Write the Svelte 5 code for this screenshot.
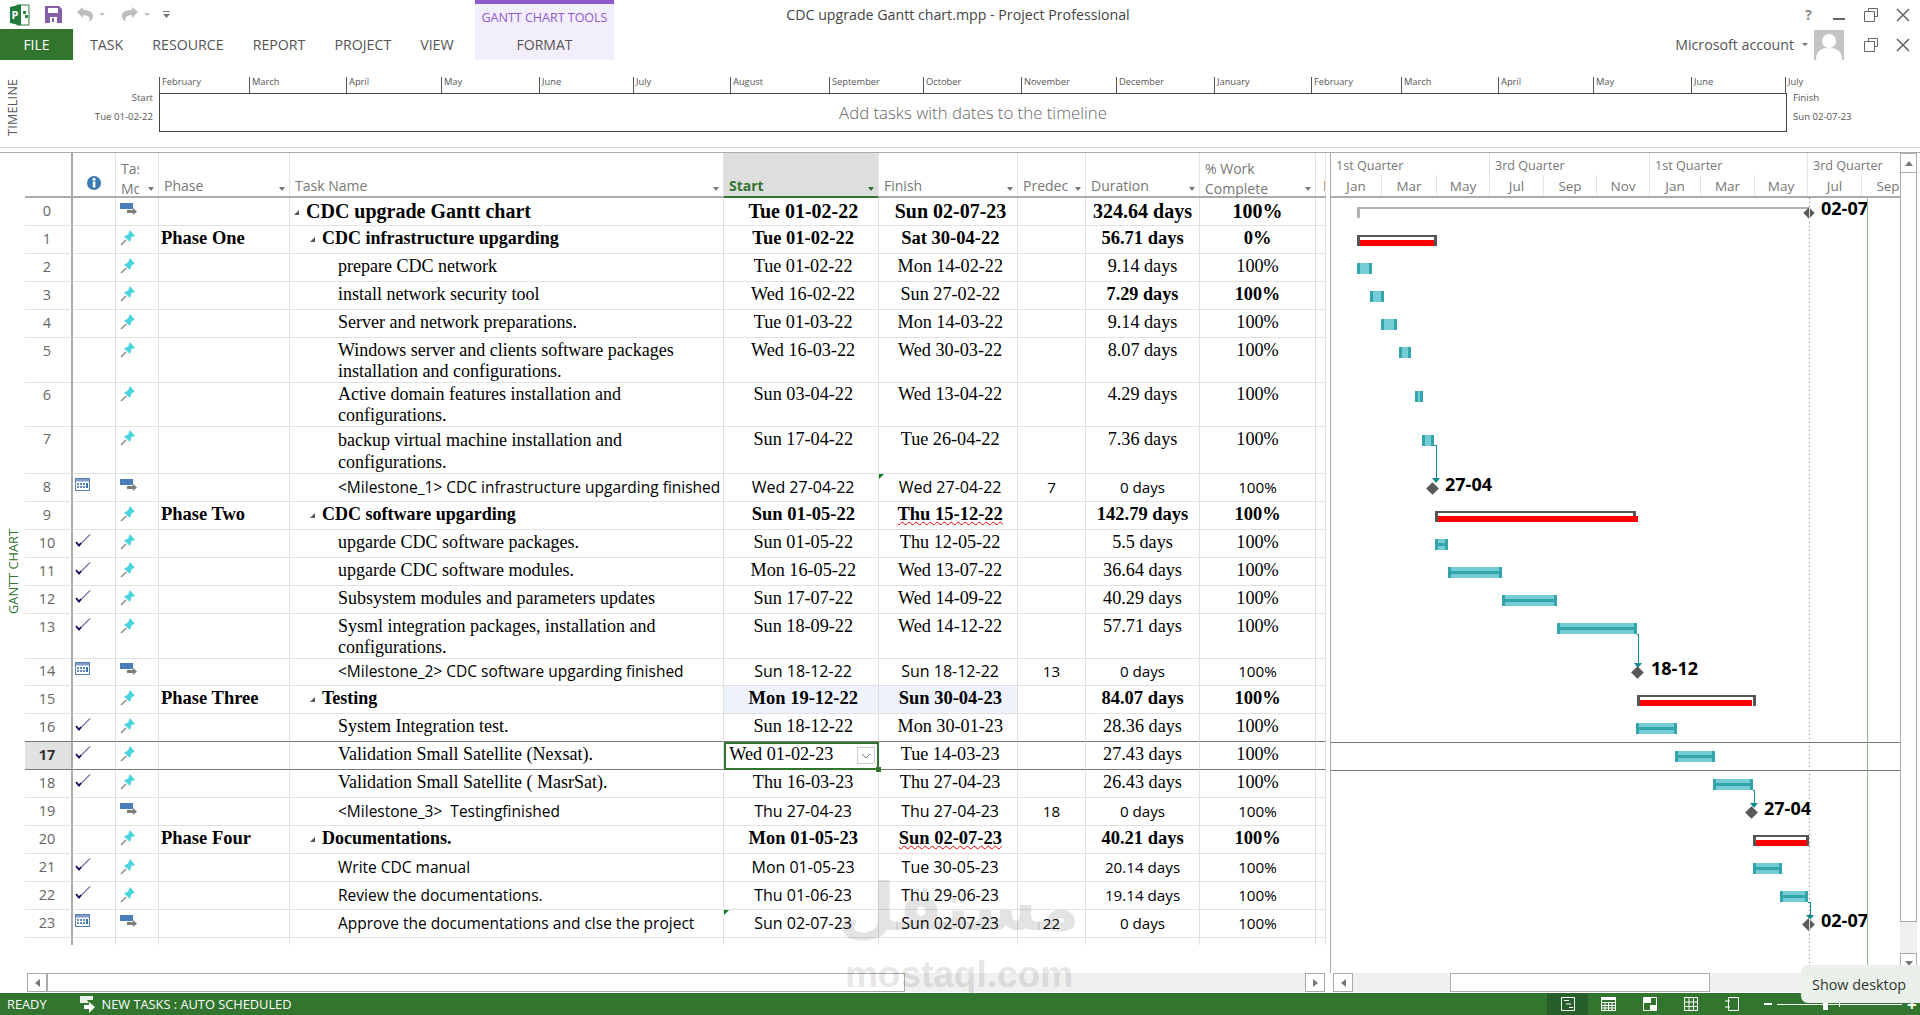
<script>
  const rows = [
    { n:0, h:28, name:'CDC upgrade Gantt chart', lvl:0, s:'Tue 01-02-22', f:'Sun 02-07-23', d:'324.64 days', w:'100%', kind:'b', mode:'auto', top:true },
    { n:1, h:28, ph:'Phase One', name:'CDC infrastructure upgarding', lvl:1, s:'Tue 01-02-22', f:'Sat 30-04-22', d:'56.71 days', w:'0%', kind:'b' },
    { n:2, h:28, name:'prepare CDC network', lvl:2, s:'Tue 01-02-22', f:'Mon 14-02-22', d:'9.14 days', w:'100%' },
    { n:3, h:28, name:'install network security tool', lvl:2, s:'Wed 16-02-22', f:'Sun 27-02-22', d:'7.29 days', w:'100%', bd:true },
    { n:4, h:28, name:'Server and network preparations.', lvl:2, s:'Tue 01-03-22', f:'Mon 14-03-22', d:'9.14 days', w:'100%' },
    { n:5, h:44, name:'Windows server and clients software packages\ninstallation and configurations.', lvl:2, s:'Wed 16-03-22', f:'Wed 30-03-22', d:'8.07 days', w:'100%' },
    { n:6, h:44, name:'Active domain features installation and\nconfigurations.', lvl:2, s:'Sun 03-04-22', f:'Wed 13-04-22', d:'4.29 days', w:'100%' },
    { n:7, h:48, name:'backup virtual machine installation and\nconfigurations.', lvl:2, s:'Sun 17-04-22', f:'Tue 26-04-22', d:'7.36 days', w:'100%', tall:true },
    { n:8, h:28, name:'<Milestone_1> CDC infrastructure upgarding finished', lvl:2, s:'Wed 27-04-22', f:'Wed 27-04-22', p:'7', d:'0 days', w:'100%', kind:'s', mode:'auto', ind:'cal', triF:true },
    { n:9, h:28, ph:'Phase Two', name:'CDC software upgarding', lvl:1, s:'Sun 01-05-22', f:'Thu 15-12-22', d:'142.79 days', w:'100%', kind:'b', wavy:true },
    { n:10, h:28, name:'upgarde CDC software packages.', lvl:2, s:'Sun 01-05-22', f:'Thu 12-05-22', d:'5.5 days', w:'100%', ind:'chk' },
    { n:11, h:28, name:'upgarde CDC software modules.', lvl:2, s:'Mon 16-05-22', f:'Wed 13-07-22', d:'36.64 days', w:'100%', ind:'chk' },
    { n:12, h:28, name:'Subsystem modules and parameters updates', lvl:2, s:'Sun 17-07-22', f:'Wed 14-09-22', d:'40.29 days', w:'100%', ind:'chk' },
    { n:13, h:44, name:'Sysml integration packages, installation and\nconfigurations.', lvl:2, s:'Sun 18-09-22', f:'Wed 14-12-22', d:'57.71 days', w:'100%', ind:'chk' },
    { n:14, h:28, name:'<Milestone_2> CDC software upgarding finished', lvl:2, s:'Sun 18-12-22', f:'Sun 18-12-22', p:'13', d:'0 days', w:'100%', kind:'s', mode:'auto', ind:'cal' },
    { n:15, h:28, ph:'Phase Three', name:'Testing', lvl:1, s:'Mon 19-12-22', f:'Sun 30-04-23', d:'84.07 days', w:'100%', kind:'b', tint:true },
    { n:16, h:28, name:'System Integration test.', lvl:2, s:'Sun 18-12-22', f:'Mon 30-01-23', d:'28.36 days', w:'100%', ind:'chk', lineB:true },
    { n:17, h:28, name:'Validation Small Satellite (Nexsat).', lvl:2, s:'Wed 01-02-23', f:'Tue 14-03-23', d:'27.43 days', w:'100%', ind:'chk', sel:true, lineB:true },
    { n:18, h:28, name:'Validation Small Satellite ( MasrSat).', lvl:2, s:'Thu 16-03-23', f:'Thu 27-04-23', d:'26.43 days', w:'100%', ind:'chk' },
    { n:19, h:28, name:'<Milestone_3>  Testingfinished', lvl:2, s:'Thu 27-04-23', f:'Thu 27-04-23', p:'18', d:'0 days', w:'100%', kind:'s', mode:'auto' },
    { n:20, h:28, ph:'Phase Four', name:'Documentations.', lvl:1, s:'Mon 01-05-23', f:'Sun 02-07-23', d:'40.21 days', w:'100%', kind:'b', wavy:true },
    { n:21, h:28, name:'Write CDC manual', lvl:2, s:'Mon 01-05-23', f:'Tue 30-05-23', d:'20.14 days', w:'100%', kind:'s', ind:'chk' },
    { n:22, h:28, name:'Review the documentations.', lvl:2, s:'Thu 01-06-23', f:'Thu 29-06-23', d:'19.14 days', w:'100%', kind:'s', ind:'chk' },
    { n:23, h:28, name:'Approve the documentations and clse the project', lvl:2, s:'Sun 02-07-23', f:'Sun 02-07-23', p:'22', d:'0 days', w:'100%', kind:'s', mode:'auto', ind:'cal', triS:true },
  ];

  const months = [['February',90],['March',97],['April',95],['May',98],['June',94],['July',97],['August',99],['September',94],['October',98],['November',95],['December',98],['January',97],['February',90],['March',97],['April',95],['May',98],['June',94],['July',20]];
  const quarters = [['1st Quarter',159],['3rd Quarter',160],['1st Quarter',158],['3rd Quarter',93]];
  const gMonths = [['Jan',51],['Mar',55],['May',53],['Jul',54],['Sep',53],['Nov',53],['Jan',51],['Mar',54],['May',53],['Jul',54],['Sep',52]];

  const OX = 1330, OY = 198;
  const tasks = [
    [1356,1371,263,'v'],[1369,1383,291,'v'],[1380,1396,319,'v'],[1398,1410,347,'v'],[1414,1422,391,'v'],[1421,1433,435,'v'],
    [1434,1447,539,'h'],[1447,1501,567,'h'],[1501,1556,595,'h'],[1556,1636,623,'h'],
    [1635,1676,723,'h'],[1674,1714,751,'h'],[1712,1752,779,'h'],[1752,1781,863,'h'],[1779,1807,891,'h'],
  ];
  const summaries = [
    [1356,1436,235,1359,1433],[1434,1635,511,1437,1637],[1636,1755,695,1639,1751],[1752,1808,835,1755,1806],
  ];
  const links = [[1433,1435,445,478],[1636,1637,634,663],[1752,1753,790,803],[1807,1809,902,915]];
  const stones = [[1431,488,'27-04',1444,false],[1636,672,'18-12',1650,false],[1750,812,'27-04',1763,false],[1807.500,924,'02-07',1820,true]];
  const box = (l,t,w,h) => `left:${l-OX}px;top:${t-OY}px;width:${w}px;height:${h}px`;
  const at = (l,t) => `left:${l-OX}px;top:${t-OY}px`;
</script>

<div class="app">
  <header class="ribbon">
    <div class="title-row">
      <div class="qat">
        <svg class="logo" width="22" height="22" viewBox="0 0 22 22"><path d="M8 1h12v20H8z" fill="#fff" stroke="#2c7a3a"/><path d="M1 3l11-2.500v21L1 19z" fill="#1f7a3c"/><text x="2.600" y="15" font-size="11" font-weight="700" fill="#fff" font-family="Open Sans">P</text><path d="M14 7h3v3h-3zM16 11h3v3h-3z" fill="#2c8a45"/></svg>
        <svg class="save" width="17" height="17" viewBox="0 0 17 17"><path d="M0 0h14l3 3v14H0z" fill="#8560a8"/><path d="M3 2h10v5H3z" fill="#fff"/><path d="M5 11h7v6H5z" fill="#fff"/><path d="M7 12h2v4H7z" fill="#8560a8"/></svg>
        <svg class="undo" width="18" height="17" viewBox="0 0 18 17"><path d="M1 6l6-5v3c6 0 10 2 10 6 0 3-2 5-4 6 1-2 1-3 0-5-1-1-3-2-6-2v3z" fill="#bdbdbd"/></svg>
        <span class="mini-caret"></span>
        <svg class="redo" width="18" height="17" viewBox="0 0 18 17"><path d="M17 6l-6-5v3C5 4 1 6 1 10c0 3 2 5 4 6-1-2-1-3 0-5 1-1 3-2 6-2v3z" fill="#bdbdbd"/></svg>
        <span class="mini-caret"></span>
        <svg class="custom" width="7" height="9" viewBox="0 0 7 9"><path d="M0 1h7v1H0zM0 4h7L3.500 8z" fill="#777"/></svg>
      </div>
      <div class="ctx-label">GANTT CHART TOOLS</div>
      <div class="doc-title">CDC upgrade Gantt chart.mpp - Project Professional</div>
      <div class="win-ctl">
        <span class="help">?</span>
        <svg width="14" height="14" viewBox="0 0 14 14"><path d="M1 10h12v2H1z" fill="#666"/></svg>
        <svg width="14" height="14" viewBox="0 0 14 14"><path d="M4.500 3.500V.5h9v8h-3M.5 3.500h10v10H.5z" fill="none" stroke="#666"/></svg>
        <svg width="14" height="14" viewBox="0 0 14 14"><path d="M1 1l12 12M13 1L1 13" stroke="#666" stroke-width="1.600"/></svg>
      </div>
    </div>
    <div class="tab-row">
      <div class="file">FILE</div>
      <nav class="tabs"><span>TASK</span><span>RESOURCE</span><span>REPORT</span><span>PROJECT</span><span>VIEW</span></nav>
      <div class="ctx-tab">FORMAT</div>
      <div class="account">
        <span class="acct-name">Microsoft account</span><span class="mini-caret dark"></span>
        <svg class="avatar" width="30" height="30" viewBox="0 0 30 30"><rect width="30" height="30" fill="#c4c4c4"/><circle cx="15" cy="11" r="7" fill="#fff"/><path d="M2 30c0-9 5-12 13-12s13 3 13 12z" fill="#fff"/></svg>
        <svg width="14" height="14" viewBox="0 0 14 14"><path d="M4.500 3.500V.5h9v8h-3M.5 3.500h10v10H.5z" fill="none" stroke="#666"/></svg>
        <svg width="14" height="14" viewBox="0 0 14 14"><path d="M1 1l12 12M13 1L1 13" stroke="#666" stroke-width="1.600"/></svg>
      </div>
    </div>
  </header>

  <section class="timeline">
    <div class="vert tl-label">TIMELINE</div>
    <div class="tl-start"><span>Start</span><span>Tue 01-02-22</span></div>
    <div class="tl-center">
      <div class="tl-months">
        {#each months as m}
          <div class="tl-month" style="width:{m[1]}px">{m[0]}</div>
        {/each}
      </div>
      <div class="tl-box">Add tasks with dates to the timeline</div>
    </div>
    <div class="tl-finish"><span>Finish</span><span>Sun 02-07-23</span></div>
  </section>

  <main class="main">
    <div class="side"><div class="vert side-label">GANTT CHART</div></div>
    <div class="table">
      <div class="thead">
        <div class="th first"></div>
        <div class="th ind"><svg width="14" height="14" viewBox="0 0 14 14"><circle cx="7" cy="7" r="7" fill="#3b79b4"/><rect x="5.800" y="5.500" width="2.600" height="6" fill="#fff"/><circle cx="7" cy="3.300" r="1.500" fill="#fff"/></svg></div>
        <div class="th two"><span class="twol">Task<br/>Mode</span><i class="caret"></i></div>
        <div class="th"><span>Phase</span><i class="caret"></i></div>
        <div class="th"><span>Task Name</span><i class="caret"></i></div>
        <div class="th active"><span>Start</span><i class="caret"></i></div>
        <div class="th"><span>Finish</span><i class="caret"></i></div>
        <div class="th"><span>Predec</span><i class="caret"></i></div>
        <div class="th"><span>Duration</span><i class="caret"></i></div>
        <div class="th"><span class="twol">% Work<br/>Complete</span><i class="caret"></i></div>
        <div class="th clip"><span>F</span></div>
      </div>
      {#each rows as r}
        <div class="tr {r.kind === 'b' ? 'bold' : ''} {r.kind === 's' ? 'sans' : ''} {r.lineB ? 'lined' : ''} {r.top ? 'top' : ''} {r.tall ? 'tall' : ''}" style="height:{r.h}px">
          <div class="td num {r.sel ? 'numsel' : ''}">{r.n}</div>
          <div class="td ind">
            {#if r.ind === 'chk'}
              <svg width="16" height="13" viewBox="0 0 16 13"><path d="M1 8l3 3.500L15 .5" fill="none" stroke="#10105e" stroke-width="1"/><path d="M1 8l3 3.500 2-2.300" fill="none" stroke="#10105e" stroke-width="1.800"/></svg>
            {:else if r.ind === 'cal'}
              <svg width="15" height="13" viewBox="0 0 15 13"><rect x=".5" y=".5" width="14" height="12" fill="#fff" stroke="#5b7db5"/><rect x="1" y="1" width="13" height="2.500" fill="#7d9bcb"/><path d="M2 5h2v2H2zM5 5h2v2H5zM8 5h2v2H8zM2 8h2v2H2zM5 8h2v2H5zM8 8h2v2H8z" fill="#6b86b8"/><path d="M11 5h2v5h-2z" fill="#2f78b8"/></svg>
            {/if}
          </div>
          <div class="td mode">
            {#if r.mode === 'auto'}
              <svg width="17" height="12" viewBox="0 0 17 12"><rect x="0" y="0" width="13" height="6" fill="#4a7db8"/><path d="M7 7h6V5l4 3.500-4 3.500v-2H7z" fill="#7c7c7c"/></svg>
            {:else}
              <svg width="16" height="16" viewBox="0 0 16 16"><path d="M1 15l5-5" stroke="#8a8a8a" stroke-width="1.500"/><path d="M10 0l5 6-3.500 1L10 12 4 6.500 8 4.500z" fill="#4bd5dd"/></svg>
            {/if}
          </div>
          <div class="td phase">{r.ph ?? ''}</div>
          <div class="td name lvl{r.lvl}">
            {#if r.lvl < 2}<i class="tri"></i>{/if}<span>{r.name}</span>
          </div>
          <div class="td date {r.tint ? 'tint' : ''} {r.sel ? 'selcell' : ''}">
            {#if r.triS}<i class="flag"></i>{/if}
            {#if r.sel}
              <span>{r.s}</span>
              <span class="dd"><svg width="10" height="6" viewBox="0 0 10 6"><path d="M1 1l4 4 4-4" fill="none" stroke="#777"/></svg></span>
              <i class="handle"></i>
            {:else}
              {r.s}
            {/if}
          </div>
          <div class="td date {r.tint ? 'tint' : ''}">
            {#if r.triF}<i class="flag"></i>{/if}
            <span class={r.wavy ? 'wavy' : ''}>{r.f}</span>
          </div>
          <div class="td ctr">{r.p ?? ''}</div>
          <div class="td ctr {r.bd ? 'strong' : ''}">{r.d}</div>
          <div class="td ctr {r.bd ? 'strong' : ''}">{r.w}</div>
          <div class="td"></div>
        </div>
      {/each}
      <div class="tr filler">
        <div class="td num"></div><div class="td ind"></div><div class="td mode"></div><div class="td phase"></div><div class="td"></div><div class="td"></div><div class="td"></div><div class="td"></div><div class="td"></div><div class="td"></div><div class="td"></div>
      </div>
    </div>

    <div class="gantt">
      <div class="ghead">
        <div class="grow q">
          {#each quarters as q}<div class="qc" style="width:{q[1]}px">{q[0]}</div>{/each}
        </div>
        <div class="grow m">
          {#each gMonths as m}<div class="mc" style="width:{m[1]}px">{m[0]}</div>{/each}
        </div>
      </div>
      <div class="canvas">
        <div class="vline dotted" style="left:{1808-OX}px"></div>
        <div class="vline green" style="left:{1866-OX}px"></div>
        <div class="hline" style="top:{742-OY}px"></div>
        <div class="hline" style="top:{770-OY}px"></div>

        <div class="root-bar" style={box(1356,207,452,2)}></div>
        <div class="root-tick" style={box(1356,207,3,11)}></div>
        <div class="stone small" style={at(1804,209)}></div>
        <div class="split" style={at(1808,207)}></div>
        <div class="lab" style={at(1820,198)}>02-07</div>

        {#each summaries as s}
          <div class="sum" style={box(s[0],s[2],s[1]-s[0],11)}></div>
          <div class="red" style={box(s[3],s[2]+5,s[4]-s[3],6)}></div>
        {/each}
        {#each tasks as t}
          <div class="bar {t[3]}" style={box(t[0],t[2],t[1]-t[0],11)}></div>
        {/each}
        {#each links as l}
          <div class="lk" style={box(l[0],l[2],l[1]-l[0]+1,l[3]-l[2])}></div>
          <div class="arrow" style={at(l[1]-4,l[3])}></div>
        {/each}
        {#each stones as m}
          <div class="stone" style={at(m[0]-4.500,m[1]-4.500)}></div>
          {#if m[4]}<div class="split" style={at(m[0],m[1]-6)}></div>{/if}
          <div class="lab" style={at(m[3],m[1]-14)}>{m[2]}</div>
        {/each}
      </div>
    </div>
    <div class="vscroll">
      <div class="vbtn"><i class="up"></i></div>
      <div class="vthumb"></div>
      <div class="vtrack"></div>
      <div class="vbtn down"><i class="dn"></i></div>
    </div>
  </main>

  <div class="hscrolls">
    <div class="hs left">
      <div class="hbtn"><i class="lf"></i></div>
      <div class="hthumb a"></div>
      <div class="htrack"></div>
      <div class="hbtn"><i class="rt"></i></div>
    </div>
    <div class="hs right">
      <div class="hbtn"><i class="lf"></i></div>
      <div class="gap1"></div>
      <div class="hthumb b"></div>
      <div class="htrack"></div>
    </div>
  </div>

  <footer class="status">
    <span class="ready">READY</span>
    <svg class="st-ic" width="17" height="17" viewBox="0 0 17 17"><path d="M0 0h13v4H7l2 3H0z" fill="#e8efe8"/><path d="M4 9h5V6l6 5-6 6v-4H4z" fill="#fff"/></svg>
    <span class="newt">NEW TASKS : AUTO SCHEDULED</span>
    <div class="views">
      <span class="vw on"><svg width="14" height="14" viewBox="0 0 14 14"><path d="M.5.5h13v13H.5z" fill="none" stroke="#fff"/><path d="M3 3.500h5M5 7h5M8 10.500h4" stroke="#fff"/></svg></span>
      <span class="vw"><svg width="15" height="14" viewBox="0 0 15 14"><path d="M.5 2.500h14v11H.5zM.5 5.500h14M.5 8.500h14M.5 11h14M4 5.500v8M7.500 5.500v8M11 5.500v8" fill="none" stroke="#fff"/><path d="M0 0h15v3H0z" fill="#fff"/></svg></span>
      <span class="vw"><svg width="14" height="14" viewBox="0 0 14 14"><path d="M.5.5h13v13H.5z" fill="none" stroke="#fff"/><path d="M1 6h7V1H1zM7 13h6V8H7z" fill="#fff"/></svg></span>
      <span class="vw"><svg width="14" height="14" viewBox="0 0 14 14"><path d="M.5.5h13v13H.5zM.5 5h13M.5 9.500h13M5 .5v13M9.500.5v13" fill="none" stroke="#fff"/></svg></span>
      <span class="vw"><svg width="14" height="14" viewBox="0 0 14 14"><path d="M3.500.5h10v13h-10zM0 4h5M0 10h5" fill="none" stroke="#fff"/></svg></span>
    </div>
    <div class="zoom">
      <i class="z-minus"></i>
      <div class="z-track"><i class="z-thumb"></i><i class="z-mid"></i></div>
      <span class="z-plus">+</span>
    </div>
  </footer>

  <div class="tooltip">Show desktop</div>
  <div class="watermark"><div class="wm-ar">مستقل</div><div class="wm-en">mostaql.com</div></div>
</div>

<style>
  :global(body) { margin: 0; background: #fff; }
  * { box-sizing: border-box; }
  .app { position: relative; width: 1920px; height: 1015px; overflow: hidden; font-family: "Open Sans", sans-serif; color: #444; display: flex; flex-direction: column; background: #fff; }
  .ribbon { height: 60px; flex: none; }
  .title-row { display: grid; grid-template-columns: 475px 139px 688px 1fr; height: 29px; }
  .qat { display: flex; align-items: center; padding-left: 9px; }
  .logo { margin-right: 14px; }
  .save { margin-right: 14px; }
  .undo { margin-right: 5px; }
  .redo { margin-left: 16px; margin-right: 5px; }
  .custom { margin-left: 13px; }
  .mini-caret { width: 0; height: 0; border-left: 3px solid transparent; border-right: 3px solid transparent; border-top: 3px solid #c0c0c0; }
  .mini-caret.dark { border-top-color: #777; margin: 0 6px 0 8px; }
  .ctx-label { background: #f3eefb; border-top: 4px solid #8e5bcf; color: #8e5bcf; font-size: 12.5px; display: flex; align-items: center; justify-content: center; white-space: nowrap; padding-top: 2px; }
  .doc-title { text-align: center; font-size: 14.2px; line-height: 29px; color: #444; }
  .win-ctl { display: flex; align-items: center; justify-content: flex-end; padding-right: 10px; gap: 18px; }
  .help { font-weight: 700; color: #888; font-size: 14px; margin-right: 2px; }
  .tab-row { display: flex; height: 31px; align-items: stretch; }
  .file { width: 73px; background: #31752f; color: #fff; font-size: 14px; display: flex; align-items: center; justify-content: center; }
  .tabs { width: 402px; display: flex; align-items: center; gap: 29px; padding-left: 17px; font-size: 14.2px; color: #555; }
  .ctx-tab { width: 139px; background: #f3eefb; color: #555; font-size: 14px; display: flex; align-items: center; justify-content: center; }
  .account { flex: 1; display: flex; align-items: center; justify-content: flex-end; padding-right: 10px; font-size: 14.2px; color: #555; }
  .avatar { margin-right: 20px; }
  .account svg:last-child { margin-left: 18px; }
  .vert { writing-mode: vertical-rl; transform: rotate(180deg); white-space: nowrap; }

  .timeline { height: 88px; flex: none; display: flex; border-bottom: 1px solid #d4d4d4; position: relative; }
  .tl-label { width: 25px; font-size: 12.5px; letter-spacing: .3px; color: #555; align-self: flex-start; margin-top: 17px; display: flex; align-items: center; justify-content: center; height: 60px; }
  .tl-start { width: 128px; padding-top: 31px; display: flex; flex-direction: column; align-items: flex-end; gap: 6px; }
  .tl-start span, .tl-finish span { font-size: 9.6px; line-height: 13px; color: #555; }
  .tl-center { margin-left: 6px; width: 1628px; }
  .tl-months { display: flex; height: 33px; padding-top: 17px; }
  .tl-month { flex: none; height: 16px; border-left: 1px solid #555; padding-left: 2px; font-size: 9.3px; line-height: 9px; color: #555; white-space: nowrap; }
  .tl-box { height: 39px; border: 1px solid #444; display: flex; align-items: center; justify-content: center; font-size: 16.8px; font-weight: 300; color: #666; }
  .tl-finish { padding: 31px 0 0 6px; display: flex; flex-direction: column; gap: 6px; }

  .main { margin-top: 4px; height: 821px; flex: none; display: flex; border-top: 1px solid #ababab; position: relative; }
  .side { width: 25px; flex: none; display: flex; justify-content: center; padding-top: 375px; }
  .side-label { font-size: 12.8px; color: #31752f; height: 88px; text-align: center; }

  .table { width: 1301px; flex: none; }
  .thead, .tr { display: grid; grid-template-columns: 48px 43px 43px 131px 434px 155px 139px 68px 114px 116px 10px; }
  .thead { height: 45px; border-bottom: 2px solid #ababab; }
  .th { position: relative; border-right: 1px solid #e4e4e4; font-size: 14px; color: #777; display: flex; align-items: flex-end; padding: 0 0 0 5px; line-height: 20px; white-space: nowrap; }
  .th.first { border-right: 2px solid #ababab; }
  .th.ind { align-items: center; justify-content: center; padding: 16px 0 0; }
  .twol { display: block; transform: translateY(3px); }
  .th.two span { width: 18px; overflow: hidden; }
  .th.clip { padding-left: 7px; overflow: hidden; }
  .caret { position: absolute; right: 4px; bottom: 5px; width: 0; height: 0; border-left: 3.500px solid transparent; border-right: 3.500px solid transparent; border-top: 4px solid #777; }
  .th.active { background: #dedede; color: #31752f; font-weight: 700; border-bottom: 2px solid #31752f; margin-bottom: -2px; }
  .th.active .caret { border-top-color: #31752f; }

  .tr { font-family: "Liberation Serif", serif; font-size: 18.2px; color: #000; }
  .td { position: relative; border-right: 1px solid #e1e1e1; border-bottom: 1px solid #e1e1e1; padding-top: 2px; line-height: 21px; white-space: pre; }
  .tr.lined .td { border-bottom-color: #777; }
  .tr.filler { height: 7px; }
  .tr.filler .td { border-bottom: 0; }
  .num { font-family: "Open Sans", sans-serif; font-size: 14.5px; color: #666; text-align: center; border-right: 2px solid #ababab; padding-right: 2px; padding-top: 2px; }
  .numsel { background: #e2e2e2; font-weight: 700; color: #333; }
  .ind { padding: 3px 0 0 2px; line-height: 0; }
  .ind svg { margin-top: 1px; }
  .mode { padding: 2px 0 0 4px; line-height: 0; }
  .mode svg { margin-top: 2px; }
  .phase { padding-left: 2px; font-weight: 700; }
  .name { display: flex; align-items: flex-start; font-size: 18px; }
  .tall .name { line-height: 22px; padding-top: 3px; }
  .tall .date, .tall .ctr { padding-top: 3px; }
  .lvl0 { padding-left: 4px; }
  .lvl1 { padding-left: 20px; }
  .lvl2 { padding-left: 48px; }
  .tri { width: 0; height: 0; margin: 9px 7px 0 0; border-left: 5px solid transparent; border-bottom: 5px solid #555; flex: none; }
  .date, .ctr { text-align: center; }
  .tint { background: #eef2fd; }
  .wavy { text-decoration: underline wavy #e00; text-decoration-thickness: 1px; text-underline-offset: 1px; }
  .flag { position: absolute; left: 0; top: 0; width: 0; height: 0; border-top: 5px solid #0a7a1e; border-right: 5px solid transparent; }
  .strong { font-weight: 700; }
  .tr.bold { font-weight: 700; font-size: 18.5px; }
  .tr.bold .num { font-weight: 400; }
  .tr.top .td:not(.num) { font-size: 20px; padding-top: 3px; }
  .tr.sans .td:not(.num) { font-family: "Open Sans", sans-serif; font-size: 16px; padding-top: 3px; }
  .tr.sans .name { font-size: 15.5px !important; }
  .tr.sans .ctr { font-size: 15.2px !important; }
  .selcell { text-align: left; padding-left: 1px; outline: 2px solid #31752f; outline-offset: -2px; z-index: 2; padding-top: 2px; }
  .dd { position: absolute; right: 3px; top: 5px; width: 18px; height: 17px; border: 1px solid #ccc; background: #fff; display: flex; align-items: center; justify-content: center; }
  .handle { position: absolute; right: -3px; bottom: -3px; width: 5px; height: 5px; background: #31752f; border: 0; }

  .gantt { width: 570px; margin-left: 4px; flex: none; border-left: 1px solid #ababab; display: flex; flex-direction: column; position: relative; overflow: hidden; }
  .ghead { height: 45px; border-bottom: 2px solid #ababab; flex: none; font-size: 13.5px; color: #777; }
  .grow { display: flex; height: 22px; white-space: nowrap; }
  .grow.m { height: 21px; }
  .qc { flex: none; padding-left: 5px; border-right: 1px solid #e4e4e4; line-height: 26px; font-size: 12.6px; }
  .mc { flex: none; text-align: center; border-right: 1px solid #e4e4e4; line-height: 22px; }
  .mc:last-child { border-right: 0; }
  .canvas { position: relative; flex: 1; background: #fff; overflow: hidden; }
  .vline { position: absolute; top: 0; bottom: 0; width: 1px; }
  .dotted { background: repeating-linear-gradient(to bottom, #777 0 1px, transparent 1px 4px); }
  .green { background: #8cba80; z-index: 2; }
  .hline { position: absolute; left: 0; right: 0; height: 1px; background: #777; }
  .root-bar { position: absolute; background: #b2b2b2; height: 2px; }
  .root-tick { position: absolute; background: #b2b2b2; }
  .stone { position: absolute; width: 9px; height: 9px; background: #595959; transform: rotate(45deg); }
  .stone.small { width: 8px; height: 8px; }
  .split { position: absolute; width: 1px; height: 12px; background: #ddd; }
  .lab { position: absolute; font-family: "Open Sans", sans-serif; font-weight: 700; font-size: 18px; color: #000; line-height: 20px; white-space: nowrap; }
  .sum { position: absolute; border: 3px solid #555; border-top-width: 2px; border-bottom: 0; background: #fff; }
  .red { position: absolute; background: #f00; }
  .bar { position: absolute; background: #74cdd5; border-left: 3px solid #32a6ac; border-right: 3px solid #32a6ac; }
  .bar.h::after { content: ""; position: absolute; left: 0; right: 0; top: 4px; height: 3px; background: #32a6ac; }
  .lk { position: absolute; border-right: 1px solid #0f8a93; border-top: 1px solid #0f8a93; }
  .arrow { position: absolute; width: 0; height: 0; border-left: 4px solid transparent; border-right: 4px solid transparent; border-top: 5px solid #0f8a93; }

  .vscroll { width: 19px; flex: none; display: flex; flex-direction: column; padding: 0 2px 0 0; }
  .vbtn { height: 20px; border: 1px solid #ababab; display: flex; align-items: center; justify-content: center; flex: none; background: #fff; }
  .vthumb { height: 749px; border: 1px solid #ababab; border-top: 0; background: #fff; flex: none; }
  .vtrack { flex: 1; background: #f0f0f0; }
  .vbtn.down { border-bottom: 0; }
  .up { border-left: 4px solid transparent; border-right: 4px solid transparent; border-bottom: 5px solid #777; }
  .dn { border-left: 4px solid transparent; border-right: 4px solid transparent; border-top: 5px solid #777; }
  .lf { border-top: 4px solid transparent; border-bottom: 4px solid transparent; border-right: 5px solid #777; }
  .rt { border-top: 4px solid transparent; border-bottom: 4px solid transparent; border-left: 5px solid #777; }

  .hscrolls { height: 20px; flex: none; display: flex; padding-left: 27px; }
  .hs { display: flex; height: 19px; }
  .hs.left { width: 1298px; }
  .hs.right { margin-left: 8px; width: 587px; }
  .hbtn { width: 20px; flex: none; border: 1px solid #ababab; display: flex; align-items: center; justify-content: center; background: #fff; }
  .hthumb { border: 1px solid #ababab; background: #fff; flex: none; }
  .hthumb.a { width: 858px; }
  .hthumb.b { width: 260px; }
  .gap1 { width: 97px; background: #f0f0f0; flex: none; }
  .htrack { flex: 1; background: #f0f0f0; }

  .status { height: 22px; flex: none; background: #31752f; color: #fff; font-size: 12.8px; display: flex; align-items: center; position: relative; }
  .ready { margin-left: 7px; }
  .st-ic { margin-left: 33px; }
  .newt { margin-left: 5px; }
  .views { margin-left: auto; display: flex; height: 100%; }
  .vw { width: 41px; height: 22px; display: flex; align-items: center; justify-content: center; }
  .vw.on { background: #265f27; }
  .zoom { width: 158px; margin-left: 10px; display: flex; align-items: center; }
  .z-minus { width: 8px; height: 2px; background: #fff; margin-left: 2px; }
  .z-track { position: relative; width: 125px; height: 1px; background: #fff; margin-left: 5px; }
  .z-thumb { position: absolute; left: 46px; top: -5px; width: 5px; height: 11px; background: #fff; }
  .z-mid { position: absolute; left: 62px; top: -2px; width: 1px; height: 5px; background: #fff; }
  .z-plus { margin-left: 5px; font-size: 17px; line-height: 17px; font-weight: 700; }

  .tooltip { position: absolute; left: 1801px; top: 965px; width: 119px; height: 38px; background: #e9f1ea; border-radius: 7px 0 0 7px; font-size: 14.4px; color: #333; display: flex; align-items: center; padding-left: 11px; z-index: 5; white-space: nowrap; }
  .watermark { position: absolute; left: 824px; top: 875px; width: 270px; text-align: center; color: rgba(70,70,70,.15); z-index: 4; font-family: "DejaVu Sans", sans-serif; font-weight: 700; line-height: 1; }
  .wm-ar { font-size: 66px; height: 81px; }
  .wm-en { font-size: 37px; font-family: "Liberation Sans", sans-serif; }
</style>
